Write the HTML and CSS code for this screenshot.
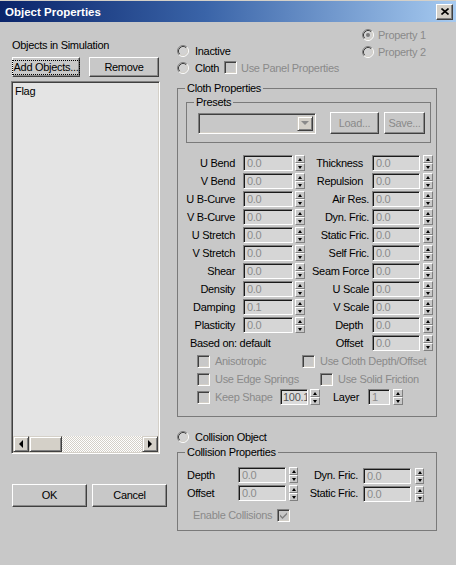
FILE: index.html
```html
<!DOCTYPE html>
<html>
<head>
<meta charset="utf-8">
<link rel="stylesheet" href="styles.css">
</head>
<body>
<svg class="defs" width="0" height="0">
  <symbol id="rad" viewBox="0 0 12 12">
    <circle cx="6" cy="6" r="4.5" fill="#d2d2d2"/>
    <path d="M2.11 9.89A5.5 5.5 0 0 1 9.89 2.11" fill="none" stroke="#808080"/>
    <path d="M9.89 2.11A5.5 5.5 0 0 1 2.11 9.89" fill="none" stroke="#ffffff"/>
    <path d="M2.82 9.18A4.5 4.5 0 0 1 9.18 2.82" fill="none" stroke="#404040"/>
    <path d="M9.18 2.82A4.5 4.5 0 0 1 2.82 9.18" fill="none" stroke="#d4d0c8"/>
  </symbol>
</svg>
<div class="window">
  <div class="titlebar">
    <span class="title">Object Properties</span>
    <span class="close"><svg width="8" height="7" viewBox="0 0 8 7"><path d="M0.5 0.5L7.5 6.5M7.5 0.5L0.5 6.5" stroke="#000" stroke-width="1.6"/></svg></span>
  </div>
  <div class="client">
    <div class="left">
      <div class="lbl-sim">Objects in Simulation</div>
      <div class="btn-row top-btns">
        <div class="btn btn-add"><span class="focus">Add Objects...</span></div>
        <div class="btn btn-remove">Remove</div>
      </div>
      <div class="list">
        <div class="list-items"><div class="item">Flag</div></div>
        <div class="hscroll">
          <div class="sbtn"><span class="tri-left"></span></div>
          <div class="sbtn thumb"></div>
          <div class="track"></div>
          <div class="sbtn"><span class="tri-right"></span></div>
        </div>
      </div>
      <div class="btn-row ok-row">
        <div class="btn btn-big">OK</div>
        <div class="btn btn-big">Cancel</div>
      </div>
    </div>

    <div class="right">
      <div class="top">
        <div class="modes">
          <div class="opt"><svg class="radio"><use href="#rad"/></svg><span>Inactive</span></div>
          <div class="opt"><svg class="radio"><use href="#rad"/></svg><span class="cloth-lbl">Cloth</span><span class="cb"></span><span class="dis">Use Panel Properties</span></div>
        </div>
        <div class="props">
          <div class="opt"><svg class="radio" viewBox="0 0 12 12"><use href="#rad"/><circle cx="6" cy="6" r="2" fill="#7a7a7a"/></svg><span>Property 1</span></div>
          <div class="opt"><svg class="radio"><use href="#rad"/></svg><span>Property 2</span></div>
        </div>
      </div>

      <fieldset class="group cloth">
        <legend>Cloth Properties</legend>
        <fieldset class="group presets">
          <legend>Presets</legend>
          <div class="presets-row">
            <div class="combo"><div class="combo-btn"><span class="tri-down-grey"></span></div></div>
            <div class="btn btn-load dis">Load...</div>
            <div class="btn btn-save dis">Save...</div>
          </div>
        </fieldset>

        <div class="fields">
          <div class="frow"><span class="l1">U Bend</span><span class="inp w50">0.0</span><span class="spin"><span class="su"></span><span class="sd"></span></span><span class="l2 pr">Thickness</span><span class="inp w48">0.0</span><span class="spin s2"><span class="su"></span><span class="sd"></span></span></div>
          <div class="frow"><span class="l1">V Bend</span><span class="inp w50">0.0</span><span class="spin"><span class="su"></span><span class="sd"></span></span><span class="l2 pr">Repulsion</span><span class="inp w48">0.0</span><span class="spin s2"><span class="su"></span><span class="sd"></span></span></div>
          <div class="frow"><span class="l1">U B-Curve</span><span class="inp w50">0.0</span><span class="spin"><span class="su"></span><span class="sd"></span></span><span class="l2">Air Res.</span><span class="inp w48">0.0</span><span class="spin s2"><span class="su"></span><span class="sd"></span></span></div>
          <div class="frow"><span class="l1">V B-Curve</span><span class="inp w50">0.0</span><span class="spin"><span class="su"></span><span class="sd"></span></span><span class="l2">Dyn. Fric.</span><span class="inp w48">0.0</span><span class="spin s2"><span class="su"></span><span class="sd"></span></span></div>
          <div class="frow"><span class="l1">U Stretch</span><span class="inp w50">0.0</span><span class="spin"><span class="su"></span><span class="sd"></span></span><span class="l2">Static Fric.</span><span class="inp w48">0.0</span><span class="spin s2"><span class="su"></span><span class="sd"></span></span></div>
          <div class="frow"><span class="l1">V Stretch</span><span class="inp w50">0.0</span><span class="spin"><span class="su"></span><span class="sd"></span></span><span class="l2">Self Fric.</span><span class="inp w48">0.0</span><span class="spin s2"><span class="su"></span><span class="sd"></span></span></div>
          <div class="frow"><span class="l1">Shear</span><span class="inp w50">0.0</span><span class="spin"><span class="su"></span><span class="sd"></span></span><span class="l2">Seam Force</span><span class="inp w48">0.0</span><span class="spin s2"><span class="su"></span><span class="sd"></span></span></div>
          <div class="frow"><span class="l1">Density</span><span class="inp w50">0.0</span><span class="spin"><span class="su"></span><span class="sd"></span></span><span class="l2">U Scale</span><span class="inp w48">0.0</span><span class="spin s2"><span class="su"></span><span class="sd"></span></span></div>
          <div class="frow"><span class="l1">Damping</span><span class="inp w50">0.1</span><span class="spin"><span class="su"></span><span class="sd"></span></span><span class="l2">V Scale</span><span class="inp w48">0.0</span><span class="spin s2"><span class="su"></span><span class="sd"></span></span></div>
          <div class="frow"><span class="l1">Plasticity</span><span class="inp w50">0.0</span><span class="spin"><span class="su"></span><span class="sd"></span></span><span class="l2 pr">Depth</span><span class="inp w48">0.0</span><span class="spin s2"><span class="su"></span><span class="sd"></span></span></div>
          <div class="frow"><span class="based">Based on: default</span><span class="l2 pr">Offset</span><span class="inp w48">0.0</span><span class="spin s2"><span class="su"></span><span class="sd"></span></span></div>

          <div class="crow">
            <span class="citem c1"><span class="cb"></span>Anisotropic</span>
            <span class="citem"><span class="cb"></span>Use Cloth Depth/Offset</span>
          </div>
          <div class="crow">
            <span class="citem c2"><span class="cb"></span>Use Edge Springs</span>
            <span class="citem"><span class="cb"></span>Use Solid Friction</span>
          </div>
          <div class="crow">
            <span class="cb"></span><span class="ks-lbl">Keep Shape</span><span class="inp w28 ks">100.1</span><span class="spin"><span class="su"></span><span class="sd"></span></span><span class="layer-lbl">Layer</span><span class="inp w22">1</span><span class="spin s2"><span class="su"></span><span class="sd"></span></span>
          </div>
        </div>
      </fieldset>

      <div class="opt crad"><svg class="radio"><use href="#rad"/></svg><span>Collision Object</span></div>

      <fieldset class="group coll">
        <legend>Collision Properties</legend>
        <div class="coll-inner">
          <div class="corow"><span class="cl1">Depth</span><span class="inp w48">0.0</span><span class="spin s2 n9"><span class="su"></span><span class="sd"></span></span><span class="cl2">Dyn. Fric.</span><span class="inp w48 lower">0.0</span><span class="spin s4 n9 lower"><span class="su"></span><span class="sd"></span></span></div>
          <div class="corow"><span class="cl1">Offset</span><span class="inp w48">0.0</span><span class="spin s2 n9"><span class="su"></span><span class="sd"></span></span><span class="cl2">Static Fric.</span><span class="inp w48 lower">0.0</span><span class="spin s4 n9 lower"><span class="su"></span><span class="sd"></span></span></div>
          <div class="enable">Enable Collisions<span class="cb checked"><svg width="7" height="7" viewBox="0 0 7 7"><path d="M0 2.5L2.5 5L7 0.5V2.5L2.5 7L0 4.5Z" fill="#808080"/></svg></span></div>
        </div>
      </fieldset>
    </div>
  </div>
</div>
</body>
</html>
```

FILE: styles.css
```css
* { box-sizing: border-box; }

body {
  margin: 0;
  font-family: "Liberation Sans", Arial, sans-serif;
  font-size: 11px;
  letter-spacing: -0.3px;
  color: #000;
  background: #c8c8c8;
}

.defs { position: absolute; width: 0; height: 0; }

.window {
  width: 456px;
  height: 565px;
  background: #c8c8c8;
  overflow: hidden;
}

.titlebar {
  height: 22px;
  border-top: 1px solid #d4d0c8;
  background: linear-gradient(90deg, #0a246a 0%, #3a64a8 45%, #a6caf0 100%);
  display: flex;
  align-items: center;
  padding-left: 5px;
}

.title {
  flex: 1;
  color: #fff;
  font-weight: bold;
  font-size: 11.5px;
  letter-spacing: 0;
}

.close {
  width: 17px;
  height: 16px;
  margin-right: 3px;
  background: #d4d0c8;
  border: 1px solid;
  border-color: #fff #404040 #404040 #fff;
  box-shadow: inset -1px -1px 0 #808080;
  display: flex;
  align-items: center;
  justify-content: center;
}

.client { display: flex; }

/* ---------- left column ---------- */
.left {
  width: 177px;
  padding-left: 11px;
}

.lbl-sim {
  margin: 16px 0 0 1px;
  line-height: 14px;
}

.btn-row { display: flex; }

.top-btns {
  margin: 5px 0 0 1px;
  gap: 9px;
}

.btn {
  height: 20px;
  background: #c8c8c8;
  border: 1px solid;
  border-color: #fff #404040 #404040 #fff;
  box-shadow: inset -1px -1px 0 #8a8a8a;
  display: flex;
  align-items: center;
  justify-content: center;
  line-height: 13px;
  white-space: nowrap;
}

.btn-add { width: 68px; }
.btn-remove { width: 70px; }

.focus {
  outline: 1px dotted #000;
  padding: 0 1px;
}

.list {
  margin-top: 4px;
  width: 149px;
  height: 373px;
  border: 1px solid;
  border-color: #808080 #fff #fff #808080;
  box-shadow: inset 1px 1px 0 #404040, inset -1px -1px 0 #d4d0c8;
  background: #e4e4e4;
  padding: 1px;
  display: flex;
  flex-direction: column;
}

.list-items {
  flex: 1;
  padding: 1px 0 0 2px;
}

.item { line-height: 14px; }

.hscroll {
  height: 16px;
  display: flex;
}

.sbtn {
  width: 16px;
  height: 16px;
  background: #d4d0c8;
  border: 1px solid;
  border-color: #d4d0c8 #404040 #404040 #d4d0c8;
  box-shadow: inset 1px 1px 0 #fff, inset -1px -1px 0 #808080;
  display: flex;
  align-items: center;
  justify-content: center;
  flex: none;
}

.thumb { width: 33px; }

.track {
  flex: 1;
  background: repeating-conic-gradient(#ffffff 0 25%, #d4d0c8 0 50%) 0 0 / 2px 2px;
}

.tri-left {
  width: 0; height: 0;
  border-top: 4px solid transparent;
  border-bottom: 4px solid transparent;
  border-right: 4px solid #000;
}

.tri-right {
  width: 0; height: 0;
  border-top: 4px solid transparent;
  border-bottom: 4px solid transparent;
  border-left: 4px solid #000;
}

.ok-row {
  margin: 30px 0 0 1px;
  gap: 5px;
}

.btn-big {
  width: 75px;
  height: 23px;
}

/* ---------- right column ---------- */
.right { width: 260px; }

.top { display: flex; }

.modes { padding-top: 20px; }

.opt {
  display: flex;
  align-items: center;
  height: 17px;
  white-space: nowrap;
}

.radio {
  width: 12px;
  height: 12px;
  flex: none;
  margin-right: 6px;
}

.cloth-lbl { width: 29px; }

.cb {
  width: 13px;
  height: 13px;
  flex: none;
  border: 1px solid;
  border-color: #808080 #fff #fff #808080;
  box-shadow: inset 1px 1px 0 #404040, inset -1px -1px 0 #d4d0c8;
  background: #c8c8c8;
  margin-right: 4px;
  display: flex;
  align-items: center;
  justify-content: center;
}

.dis { color: #8a8a8a; }

.props {
  margin-left: auto;
  width: 75px;
  padding-top: 4px;
  color: #8a8a8a;
}

.props .radio { margin-right: 4px; }

.group {
  margin: 0;
  padding: 0;
  border: 1px solid #7a7a7a;
  min-width: 0;
}

.group legend {
  margin-left: 7px;
  padding: 0 2px;
  line-height: 13px;
}

.cloth {
  margin-top: 6px;
  width: 260px;
  padding-bottom: 10px;
}

.presets { margin: 1px 5px 0 8px; }

.presets-row {
  display: flex;
  align-items: center;
  padding: 3px 0 8px 11px;
}

.combo {
  width: 118px;
  height: 21px;
  border: 1px solid;
  border-color: #808080 #fff #fff #808080;
  box-shadow: inset 1px 1px 0 #404040, inset -1px -1px 0 #d4d0c8;
  background: #c8c8c8;
  padding: 2px;
  display: flex;
  justify-content: flex-end;
}

.combo-btn {
  width: 16px;
  height: 15px;
  background: #d4d0c8;
  border: 1px solid;
  border-color: #d4d0c8 #404040 #404040 #d4d0c8;
  box-shadow: inset 1px 1px 0 #fff, inset -1px -1px 0 #808080;
  display: flex;
  align-items: center;
  justify-content: center;
}

.tri-down-grey {
  width: 0; height: 0;
  border-left: 4px solid transparent;
  border-right: 4px solid transparent;
  border-top: 4px solid #8a8a8a;
}

.btn-load {
  margin-left: 14px;
  width: 49px;
  height: 22px;
}

.btn-save {
  margin-left: 5px;
  width: 41px;
  height: 22px;
}

.fields { margin-top: 11px; }

.frow, .crow, .corow {
  display: flex;
  align-items: center;
  height: 18px;
  white-space: nowrap;
}

.l1 {
  width: 57px;
  margin-right: 8px;
  text-align: right;
  flex: none;
}

.l2 {
  width: 64px;
  margin-right: 3px;
  text-align: right;
  flex: none;
}

.l2.pr { padding-right: 6px; }

.based {
  width: 127px;
  padding-left: 12px;
  flex: none;
}

.inp {
  height: 16px;
  flex: none;
  border: 1px solid;
  border-color: #808080 #fff #fff #808080;
  box-shadow: inset 1px 1px 0 #1a1a1a;
  background: #d6d6d6;
  color: #8c8c8c;
  padding-left: 3px;
  line-height: 14px;
  overflow: hidden;
}

.w50 { width: 50px; }
.w48 { width: 48px; }
.w28 { width: 28px; }
.w22 { width: 22px; }

.ks { color: #555; background: #dcdcdc; padding-left: 2px; }

.spin {
  width: 10px;
  height: 16px;
  flex: none;
  margin-left: 2px;
  display: flex;
  flex-direction: column;
}

.spin.s2 { margin-left: 3px; }
.spin.s4 { margin-left: 4px; }
.spin.n9 { width: 9px; }

.su, .sd {
  flex: 1;
  background: #c8c8c8;
  border-top: 1px solid #fff;
  border-left: 1px solid #fff;
  border-right: 1px solid #808080;
  border-bottom: 1px solid #808080;
  display: flex;
  align-items: center;
  justify-content: center;
}

.su::after {
  content: "";
  width: 0; height: 0;
  border-left: 2px solid transparent;
  border-right: 2px solid transparent;
  border-bottom: 3px solid #000;
}

.sd::after {
  content: "";
  width: 0; height: 0;
  border-left: 2px solid transparent;
  border-right: 2px solid transparent;
  border-top: 3px solid #000;
}

.crow {
  padding-left: 19px;
  color: #8a8a8a;
}

.citem {
  display: flex;
  align-items: center;
}

.citem .cb { margin-right: 5px; }

.c1 { width: 105px; }
.c2 { width: 123px; }

.crow > .cb { margin-right: 5px; }

.ks-lbl { width: 65px; }

.layer-lbl {
  margin-left: 13px;
  width: 35px;
  color: #000;
}

.crad { margin-top: 11px; }

.coll {
  margin-top: 1px;
  width: 260px;
}

.coll-inner { padding: 7px 0 6px 0; }

.cl1 {
  width: 60px;
  padding-left: 9px;
  flex: none;
}

.cl2 {
  width: 62px;
  padding-right: 2px;
  margin-right: 3px;
  text-align: right;
  flex: none;
}

.lower { position: relative; top: 1px; }

.enable {
  margin-top: 4px;
  height: 18px;
  display: flex;
  align-items: center;
  padding-left: 15px;
  color: #8a8a8a;
  white-space: nowrap;
}

.enable .cb { margin-left: 5px; }
```
